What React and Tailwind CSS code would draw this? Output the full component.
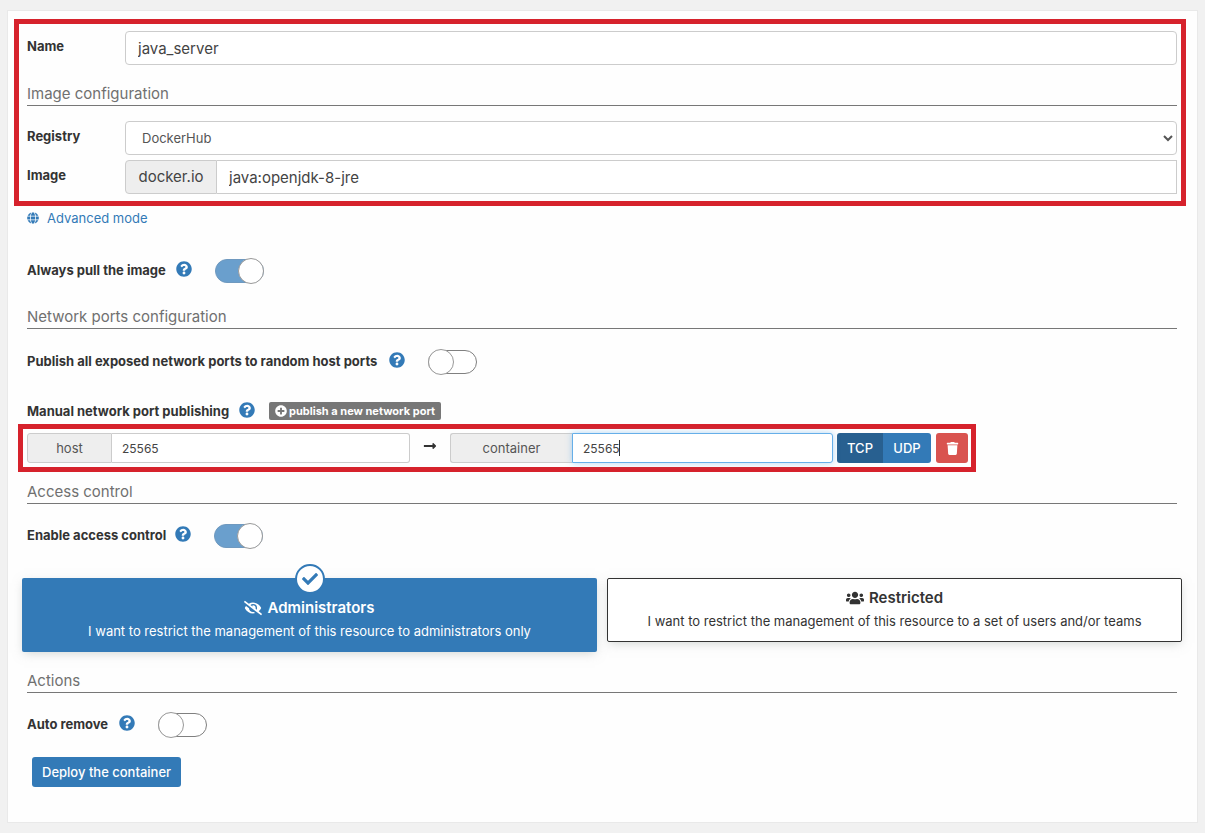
import { useState } from 'react';
import {
  FaCheck,
  FaEyeSlash,
  FaGlobe,
  FaLongArrowAltRight,
  FaPlusCircle,
  FaQuestionCircle,
  FaTrash,
  FaUsers,
} from 'react-icons/fa';

function SectionTitle({ children }) {
  return (
    <h2 className="border-b border-[#777777] pb-px text-[15px] leading-5 text-[#707070]">
      {children}
    </h2>
  );
}

function ToggleRow({ id, label, labelClass, defaultChecked = false }) {
  return (
    <div className="flex h-[26px] items-center">
      <div className={`flex items-center justify-between pb-[2px] ${labelClass}`}>
        <label htmlFor={id} className="font-bold">{label}</label>
        <FaQuestionCircle className="mb-[2px] size-4 text-[#337ab7]" />
      </div>
      <input
        id={id}
        type="checkbox"
        defaultChecked={defaultChecked}
        className="relative ml-[23px] h-6 w-[49px] appearance-none rounded-full border border-[#808080] bg-white before:absolute before:-top-[2px] before:-left-px before:size-[26px] before:rounded-full before:border before:border-[#999999] before:bg-white checked:border-[#6f99bf] checked:bg-[#6a9fcd] checked:before:right-[-1px] checked:before:left-auto"
      />
    </div>
  );
}

export default function App() {
  const [protocol, setProtocol] = useState('tcp');
  const [access, setAccess] = useState('administrators');

  return (
    <div className="min-h-screen bg-[#f1f1f1] pt-[10px] pr-[7px] pb-[10px] pl-[7px] font-['Inter','Liberation_Sans',sans-serif] text-[13px] leading-5 text-[#333333]">
      <form
        className="border border-[#e9e9e9] bg-[#fefefe] pt-2 pb-[35px]"
        onSubmit={(e) => e.preventDefault()}
      >
        {/* Name and image */}
        <div className="mr-[11px] ml-[6px] border-[5px] border-[#d6222c] pt-[7px] pr-1 pb-[7px] pl-2">
          <div className="flex">
            <label htmlFor="name" className="w-[98px] pt-[5px] font-bold">Name</label>
            <input
              id="name"
              defaultValue="java_server"
              className="h-[34px] min-w-0 flex-1 rounded border border-[#cccccc] bg-white px-3 text-[15px] text-[#444444]"
            />
          </div>

          <div className="mt-[19px] mb-[15px]">
            <SectionTitle>Image configuration</SectionTitle>
          </div>

          <div className="flex">
            <label htmlFor="registry" className="w-[98px] pt-[5px] font-bold">Registry</label>
            <select
              id="registry"
              className="h-[34px] min-w-0 flex-1 rounded border border-[#cccccc] bg-white px-3 text-[13px] text-[#555555]"
            >
              <option>DockerHub</option>
            </select>
          </div>

          <div className="mt-[5px] flex">
            <label htmlFor="image" className="w-[98px] pt-[5px] font-bold">Image</label>
            <span className="flex h-[34px] w-[92px] items-center justify-center rounded-l border border-[#cccccc] bg-[#eeeeee] text-[15px] text-[#444444]">
              docker.io
            </span>
            <input
              id="image"
              defaultValue="java:openjdk-8-jre"
              className="h-[34px] min-w-0 flex-1 border border-l-0 border-[#cccccc] bg-white px-3 text-[15px] text-[#444444]"
            />
          </div>
        </div>

        <div className="mr-5 ml-[19px]">
          <a href="#advanced" className="mt-[2px] flex w-fit items-center gap-2 text-[#337ab7]">
            <FaGlobe className="size-3" />
            Advanced mode
          </a>

          <div className="mt-[30px] mb-[23px]">
            <ToggleRow id="pull" label="Always pull the image" labelClass="w-[165px]" defaultChecked />
          </div>

          <SectionTitle>Network ports configuration</SectionTitle>

          <div className="mt-5">
            <ToggleRow
              id="publish-all"
              label="Publish all exposed network ports to random host ports"
              labelClass="w-[378px]"
            />
          </div>

          <div className="mt-[26px] flex items-center">
            <div className="flex w-[228px] items-center justify-between">
              <span className="font-bold">Manual network port publishing</span>
              <FaQuestionCircle className="mb-[3px] size-4 text-[#337ab7]" />
            </div>
            <button
              type="button"
              className="ml-[14px] flex h-[18px] items-center gap-[2px] rounded-xs bg-[#777777] px-[6px] text-[11px] font-bold text-white"
            >
              <FaPlusCircle className="size-3" />
              publish a new network port
            </button>
          </div>
        </div>

        {/* Port mapping */}
        <div className="mt-[3px] mr-[221px] ml-[10px] flex items-center border-[5px] border-[#d6222c] py-1 pr-[3px] pl-1">
          <div className="flex min-w-0 flex-1">
            <label
              htmlFor="host-port"
              className="flex h-[30px] w-[85px] items-center justify-center rounded-l-[3px] border border-[#cccccc] bg-[#eeeeee] text-[#555555]"
            >
              host
            </label>
            <input
              id="host-port"
              defaultValue="25565"
              className="h-[30px] min-w-0 flex-1 rounded-r-[3px] border border-l-0 border-[#cccccc] bg-white px-[10px] text-[12px] text-[#444444]"
            />
          </div>
          <div className="flex w-10 justify-center pb-1">
            <FaLongArrowAltRight className="size-[14px]" />
          </div>
          <div className="flex min-w-0 flex-1">
            <label
              htmlFor="container-port"
              className="flex h-[30px] w-[122px] items-center justify-center rounded-l-[3px] border border-r-0 border-[#cccccc] bg-[#eeeeee] text-[#555555]"
            >
              container
            </label>
            <div className="relative min-w-0 flex-1">
              <input
                id="container-port"
                defaultValue="25565"
                className="h-[30px] w-full rounded-r-[3px] border border-[#66afe9] bg-white px-[10px] text-[12px] text-[#444444] shadow-[0_0_6px_rgba(102,175,233,0.5)] outline-none"
              />
              {/* text cursor */}
              <span className="absolute top-[7px] left-[47px] h-4 w-px bg-[#333333]" />
            </div>
          </div>
          <div className="ml-1 flex text-[13px] font-medium text-white">
            <button
              type="button"
              onClick={() => setProtocol('tcp')}
              className={`h-[30px] w-[46px] rounded-l-[3px] ${protocol === 'tcp' ? 'bg-[#286090]' : 'bg-[#337ab7]'}`}
            >
              TCP
            </button>
            <button
              type="button"
              onClick={() => setProtocol('udp')}
              className={`h-[30px] w-12 rounded-r-[3px] ${protocol === 'udp' ? 'bg-[#286090]' : 'bg-[#337ab7]'}`}
            >
              UDP
            </button>
          </div>
          <button
            type="button"
            aria-label="Remove port"
            className="ml-[5px] flex h-[30px] w-8 items-center justify-center rounded-[3px] bg-[#d9534f] text-white"
          >
            <FaTrash className="size-[13px]" />
          </button>
        </div>

        <div className="mt-[10px] mr-5 ml-[19px]">
          <SectionTitle>Access control</SectionTitle>
          <div className="mt-[19px]">
            <ToggleRow id="access" label="Enable access control" labelClass="w-[164px]" defaultChecked />
          </div>
        </div>

        {/* Ownership */}
        <div className="mt-[29px] mr-[15px] ml-[14px] grid grid-cols-2 items-start gap-[10px]">
          <button
            type="button"
            onClick={() => setAccess('administrators')}
            aria-pressed={access === 'administrators'}
            className="relative flex h-[74px] flex-col items-center rounded-xs bg-[#337ab7] pt-5 text-white shadow-[0_3px_10px_-2px_rgba(161,170,166,0.5)]"
          >
            <span className="absolute -top-[14px] left-1/2 flex size-[30px] -translate-x-1/2 items-center justify-center rounded-full border-2 border-[#337ab7] bg-white text-[#337ab7]">
              <FaCheck className="size-4" />
            </span>
            <span className="flex items-center gap-[5px] text-[15px] font-semibold">
              <FaEyeSlash className="size-[18px]" />
              Administrators
            </span>
            <span className="mt-[3px]">I want to restrict the management of this resource to administrators only</span>
          </button>
          <button
            type="button"
            onClick={() => setAccess('restricted')}
            aria-pressed={access === 'restricted'}
            className="flex h-16 flex-col items-center rounded-xs border border-[#333333] bg-white pt-[9px] shadow-[0_3px_10px_-2px_rgba(161,170,166,0.5)]"
          >
            <span className="flex items-center gap-[5px] text-[15px] font-semibold">
              <FaUsers className="size-[18px]" />
              Restricted
            </span>
            <span className="mt-[3px]">I want to restrict the management of this resource to a set of users and/or teams</span>
          </button>
        </div>

        <div className="mt-[19px] mr-5 ml-[19px]">
          <SectionTitle>Actions</SectionTitle>
          <div className="mt-[19px]">
            <ToggleRow id="auto-remove" label="Auto remove" labelClass="w-[108px]" />
          </div>
          <button
            type="submit"
            className="mt-[19px] ml-[5px] h-[30px] rounded-[3px] bg-[#337ab7] px-[10px] font-medium text-white"
          >
            Deploy the container
          </button>
        </div>
      </form>
    </div>
  );
}
